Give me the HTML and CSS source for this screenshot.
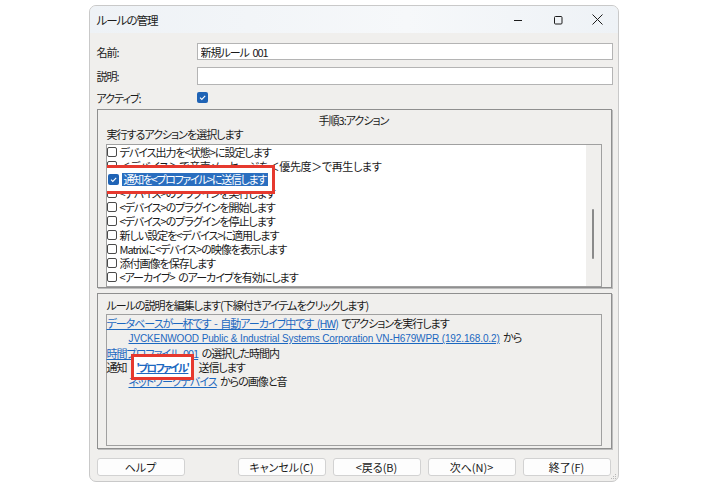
FILE: index.html
```html
<!DOCTYPE html>
<html lang="ja">
<head>
  <meta charset="UTF-8">
  <title>ルールの管理</title>
  <link rel="stylesheet" href="styles.css">
</head>
<body>
  <div class="window">
    <div class="titlebar">
      <span class="title">ルールの管理</span>
      <div class="controls">
        <span class="ctl">
          <svg width="10" height="10" viewBox="0 0 10 10"><path d="M1 5.5h8" stroke="#1c1c1c" stroke-width="1"/></svg>
        </span>
        <span class="ctl">
          <svg width="10" height="10" viewBox="0 0 10 10"><rect x="1.5" y="1.5" width="7.5" height="7.5" rx="1" fill="none" stroke="#1c1c1c" stroke-width="1"/></svg>
        </span>
        <span class="ctl">
          <svg width="11" height="11" viewBox="0 0 11 11"><path d="M0.5 0.5l10 10M10.5 0.5l-10 10" stroke="#1c1c1c" stroke-width="1"/></svg>
        </span>
      </div>
    </div>

    <div class="body">
      <div class="field">
        <label class="label">名前:</label>
        <input class="text" type="text" value="新規ルール 001">
      </div>
      <div class="field field-desc">
        <label class="label">説明:</label>
        <input class="text" type="text" value="">
      </div>
      <div class="field field-check">
        <label class="label">アクティブ:</label>
        <span class="check check-on">
          <svg width="11" height="11" viewBox="0 0 11 11"><path d="M3 5.6l1.8 1.8 3.4-3.6" fill="none" stroke="#fff" stroke-width="1.1"/></svg>
        </span>
      </div>

      <!-- 手順3 -->
      <div class="group group-actions">
        <div class="group-title">手順3:アクション</div>
        <div class="hint">実行するアクションを選択します</div>
        <div class="listbox">
          <ul class="actions">
            <li><span class="check"></span>デバイス出力を&lt;状態&gt;に設定します</li>
            <li class="wide"><span class="check"></span>＜デバイス＞で音声メッセージを＜優先度＞で再生します</li>
            <li class="selected">
              <span class="callout">
                <span class="check check-on">
                  <svg width="11" height="11" viewBox="0 0 11 11"><path d="M3 5.6l1.8 1.8 3.4-3.6" fill="none" stroke="#fff" stroke-width="1.1"/></svg>
                </span>
                <span class="sel">通知を&lt;プロファイル&gt;に送信します</span>
              </span>
            </li>
            <li><span class="check"></span>&lt;デバイス&gt;のプラグインを実行します</li>
            <li><span class="check"></span>&lt;デバイス&gt;のプラグインを開始します</li>
            <li><span class="check"></span>&lt;デバイス&gt;のプラグインを停止します</li>
            <li><span class="check"></span>新しい設定を&lt;デバイス&gt;に適用します</li>
            <li><span class="check"></span>Matrixに&lt;デバイス&gt;の映像を表示します</li>
            <li><span class="check"></span>添付画像を保存します</li>
            <li><span class="check"></span>&lt;アーカイブ&gt; のアーカイブを有効にします</li>
          </ul>
          <div class="scrollbar"><span class="thumb"></span></div>
        </div>
      </div>

      <!-- ルールの説明 -->
      <div class="group group-desc">
        <div class="hint">ルールの説明を編集します(下線付きアイテムをクリックします)</div>
        <div class="descbox">
          <p><a href="#">データベースが一杯です - 自動アーカイブ中です (HW)</a> でアクションを実行します</p>
          <p class="indent"><a href="#" class="latin">JVCKENWOOD Public &amp; Industrial Systems Corporation VN-H679WPR (192.168.0.2)</a> から</p>
          <p><a href="#">時間プロファイル 001</a> の選択した時間内</p>
          <p>通知<span class="callout-link"><a href="#">'プロファイル'</a></span>送信します</p>
          <p class="indent"><a href="#">ネットワークデバイス</a> からの画像と音</p>
        </div>
      </div>

      <div class="buttons">
        <button class="btn btn-help">ヘルプ</button>
        <button class="btn">キャンセル(C)</button>
        <button class="btn">&lt;戻る(B)</button>
        <button class="btn">次へ(N)&gt;</button>
        <button class="btn">終了(F)</button>
      </div>
    </div>
    <svg class="grip" width="6" height="6" viewBox="0 0 6 6"><path d="M5 1h1v1H5zM3 3h1v1H3zM5 3h1v1H5zM1 5h1v1H1zM3 5h1v1H3zM5 5h1v1H5z" fill="#b8b8b8"/></svg>
  </div>
</body>
</html>
```

FILE: styles.css
```css
* {
  box-sizing: border-box;
}

body {
  margin: 0;
  background: #fff;
  font-family: "Noto Sans CJK JP", sans-serif;
  font-size: 11px;
  font-feature-settings: "palt";
  letter-spacing: -1px;
  word-spacing: 2px;
  color: #1a1a1a;
  display: flex;
  justify-content: center;
  padding-top: 5px;
}

.window {
  width: 530px;
  height: 477px;
  margin-left: -1px;
  background: #f0efed;
  border: 1px solid #c9c9c9;
  border-radius: 7px;
  display: flex;
  flex-direction: column;
  position: relative;
  overflow: hidden;
}

.titlebar {
  height: 27px;
  flex: none;
  background: linear-gradient(90deg, #eef2f6, #f6f8fa 60%, #eef2f6);
  display: flex;
  align-items: center;
  padding-left: 7px;
}

.title {
  font-size: 11.5px;
  color: #1c1c1c;
  padding-top: 1px;
}

.controls {
  margin-left: auto;
  display: flex;
  height: 100%;
}

.ctl {
  width: 40px;
  display: flex;
  align-items: center;
  justify-content: center;
}

.body {
  flex: 1;
  display: flex;
  flex-direction: column;
  padding: 10px 5px 0 7px;
}

/* フォーム */
.field {
  display: flex;
  align-items: center;
  height: 17px;
}

.field-desc {
  margin-top: 7px;
  height: 18px;
}

.field-check {
  margin-top: 7px;
  height: 11px;
}

.label {
  width: 100px;
  flex: none;
}

.text {
  flex: 1;
  height: 100%;
  border: 1px solid #b4b4b4;
  background: #fff;
  font: inherit;
  font-size: 11px;
  letter-spacing: -1px;
  word-spacing: 2px;
  padding: 0 3px;
  color: #1a1a1a;
  outline: none;
}

.check {
  display: inline-flex;
  width: 10px;
  height: 10px;
  flex: none;
  border: 1px solid #4a4a4a;
  border-radius: 2px;
  background: #fff;
  margin-right: 3px;
}

.check-on {
  width: 11px;
  height: 11px;
  border: none;
  background: #1f63b5;
  align-items: center;
  justify-content: center;
}

/* グループ */
.group {
  border: 1px solid #8f8f8f;
  box-shadow: 1px 1px 0 #bdbdbd;
  margin-right: 1px;
  padding: 3px 9px 0 8px;
}

.group-actions {
  margin-top: 6px;
  height: 179px;
}

.group-desc {
  margin-top: 5px;
  height: 156px;
}

.group-title {
  text-align: center;
  line-height: 14px;
}

.hint {
  line-height: 14px;
  padding-left: 1px;
}

.group-desc .hint {
  line-height: 16px;
}

.listbox {
  display: flex;
  height: 143px;
  margin-top: 3px;
  border: 1px solid #a0a0a0;
  background: #fff;
}

.actions {
  list-style: none;
  margin: 0;
  padding: 0;
  flex: 1;
  overflow: hidden;
}

.actions li {
  height: 13.85px;
  display: flex;
  align-items: center;
  white-space: nowrap;
}

.actions .wide {
  letter-spacing: -0.35px;
}

.callout {
  display: inline-flex;
  align-items: center;
  position: relative;
  z-index: 1;
  margin-left: -2px;
  padding: 1px 0 1px 3px;
  background: #fff;
  box-shadow: 0 0 0 4px #fff, 0 0 0 7px #e6392e;
}

.sel {
  background: #2a6ebf;
  color: #fff;
  padding: 0 2px;
  line-height: 13px;
  letter-spacing: -1.35px;
}

.scrollbar {
  width: 15px;
  flex: none;
  background: #f0efed;
  display: flex;
  justify-content: center;
  padding-top: 64px;
}

.thumb {
  width: 2px;
  height: 50px;
  background: #8a8a8a;
  border-radius: 1px;
}

.descbox {
  height: 132px;
  margin-top: 1px;
  border: 1px solid #a0a0a0;
  padding-top: 1px;
}

.descbox p {
  margin: 0;
  line-height: 14px;
  white-space: nowrap;
}

.descbox .indent {
  padding-left: 22px;
}

.descbox a {
  color: #1c68c0;
  text-decoration: underline;
}

.latin {
  font-family: "Liberation Sans", "Noto Sans CJK JP", sans-serif;
  font-size: 10px;
  letter-spacing: -0.12px;
  word-spacing: 0;
}

.callout-link {
  display: inline-block;
  position: relative;
  z-index: 1;
  margin: -6px 4px;
  padding: 3px 3px 0 3px;
  height: 26px;
  vertical-align: top;
  background: #fff;
  border: 3px solid #e6392e;
  line-height: 14px;
}

.callout-link a {
  font-weight: bold;
  font-size: 10.5px;
  letter-spacing: -1.6px;
}

/* ボタン */
.buttons {
  display: flex;
  gap: 7px;
  margin-top: 9px;
  padding-right: 2px;
}

.btn {
  width: 88px;
  height: 18px;
  background: #fdfdfd;
  border: 1px solid #d2d2d2;
  border-radius: 3px;
  font: inherit;
  font-size: 11px;
  color: #1a1a1a;
  padding: 0;
}

.btn-help {
  margin-right: auto;
}

.grip {
  position: absolute;
  right: 2px;
  bottom: 2px;
}
```
